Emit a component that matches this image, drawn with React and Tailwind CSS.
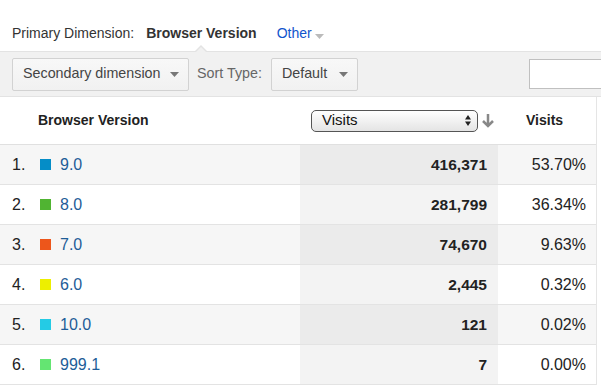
import React from 'react';

const rows = [
  { n: 1, color: 'bg-[#058dc7]', label: '9.0', visits: '416,371', pct: '53.70%' },
  { n: 2, color: 'bg-[#50b432]', label: '8.0', visits: '281,799', pct: '36.34%' },
  { n: 3, color: 'bg-[#ed561b]', label: '7.0', visits: '74,670', pct: '9.63%' },
  { n: 4, color: 'bg-[#edef00]', label: '6.0', visits: '2,445', pct: '0.32%' },
  { n: 5, color: 'bg-[#24cbe5]', label: '10.0', visits: '121', pct: '0.02%' },
  { n: 6, color: 'bg-[#64e572]', label: '999.1', visits: '7', pct: '0.00%' },
];

const Caret = () => (
  <svg width="9" height="5" viewBox="0 0 9 5" className="shrink-0">
    <path d="M0 0h9L4.5 5z" fill="#777" />
  </svg>
);

export default function App() {
  return (
    <div className="w-[601px] h-[388px] bg-white overflow-hidden font-['Liberation_Sans',Arial,sans-serif] text-[#222]">
      {/* primary dimension */}
      <div className="h-[51px] flex items-end pb-[7px] pl-3 text-[14px]">
        <span className="text-[#333]">Primary Dimension:</span>
        <span className="ml-[12px] font-bold text-[#333]">Browser Version</span>
        <span className="ml-[20px] text-[#1155cc]">Other</span>
        <span className="ml-[3px] mb-[5px]"><svg width="9" height="5" viewBox="0 0 9 5"><path d="M0 0h9L4.5 5z" fill="#bbb" /></svg></span>
      </div>

      {/* toolbar */}
      <div className="relative h-[46px] bg-[#f1f1f1] border-t border-b border-[#e3e3e3] flex items-center pl-3">
        <div className="absolute left-[194px] -top-[7px] w-0 h-0 border-l-[7px] border-r-[7px] border-b-[7px] border-l-transparent border-r-transparent border-b-[#e3e3e3]" />
        <div className="absolute left-[195px] -top-[5px] w-0 h-0 border-l-[6px] border-r-[6px] border-b-[6px] border-l-transparent border-r-transparent border-b-[#f1f1f1]" />
        <div className="h-[33px] w-[177px] border border-[#d2d2d2] rounded-[2px] bg-gradient-to-b from-[#f8f8f8] to-[#f1f1f1] flex items-center justify-between pl-[10px] pr-[9px] text-[14.3px] text-[#444]">
          <span>Secondary dimension</span>
          <Caret />
        </div>
        <span className="ml-[8px] text-[14.3px] text-[#666]">Sort Type:</span>
        <div className="ml-[9px] h-[33px] w-[87px] border border-[#d2d2d2] rounded-[2px] bg-gradient-to-b from-[#f8f8f8] to-[#f1f1f1] flex items-center justify-between pl-[10px] pr-[9px] text-[14.3px] text-[#444]">
          <span>Default</span>
          <Caret />
        </div>
        <div className="ml-auto h-[30px] w-[72px] border border-[#c0c0c0] border-r-0 bg-white" />
      </div>

      {/* table */}
      <div className="w-[597px] border-r border-[#e5e5e5]">
        <div className="grid grid-cols-[300px_198px_98px] h-[48px] items-center border-b border-[#e0e0e0] text-[14px]">
          <div className="pl-[38px] font-bold">Browser Version</div>
          <div className="flex items-center pl-[11px]">
            <div className="w-[167px] h-[22px] rounded-[5px] border border-[#555] bg-gradient-to-b from-white to-[#e4e4e4] flex items-center justify-between pl-[10px] pr-[6px] text-[15px] text-[#111]">
              <span>Visits</span>
              <svg width="6" height="11" viewBox="0 0 6 11">
                <path d="M0 4.5L3 0l3 4.5zM0 6.5L3 11l3-4.5z" fill="#222" />
              </svg>
            </div>
            <svg width="14" height="15" viewBox="0 0 14 15" className="ml-[3px]">
              <path d="M7 1v11M2 8l5 5 5-5" stroke="#888" strokeWidth="2.5" fill="none" />
            </svg>
          </div>
          <div className="pl-[28px] font-bold">Visits</div>
        </div>

        {rows.map((r) => {
          const odd = r.n % 2 === 1;
          return (
            <div
              key={r.n}
              className={`grid grid-cols-[300px_198px_98px] h-[40px] items-center border-b border-[#e3e3e3] text-[16px] ${odd ? 'bg-[#f6f6f6]' : 'bg-white'}`}
            >
              <div className="flex items-center pl-3">
                <span className="w-[28px]">{r.n}.</span>
                <span className={`w-[11px] h-[11px] ${r.color}`} />
                <span className="ml-[9px] text-[#1e5d98]">{r.label}</span>
              </div>
              <div className={`h-full flex items-center justify-end pr-[11px] font-bold text-[15.5px] ${odd ? 'bg-[#ebebeb]' : 'bg-[#f3f3f3]'}`}>
                {r.visits}
              </div>
              <div className="h-full flex items-center justify-end pr-[10px]">{r.pct}</div>
            </div>
          );
        })}
      </div>
    </div>
  );
}
